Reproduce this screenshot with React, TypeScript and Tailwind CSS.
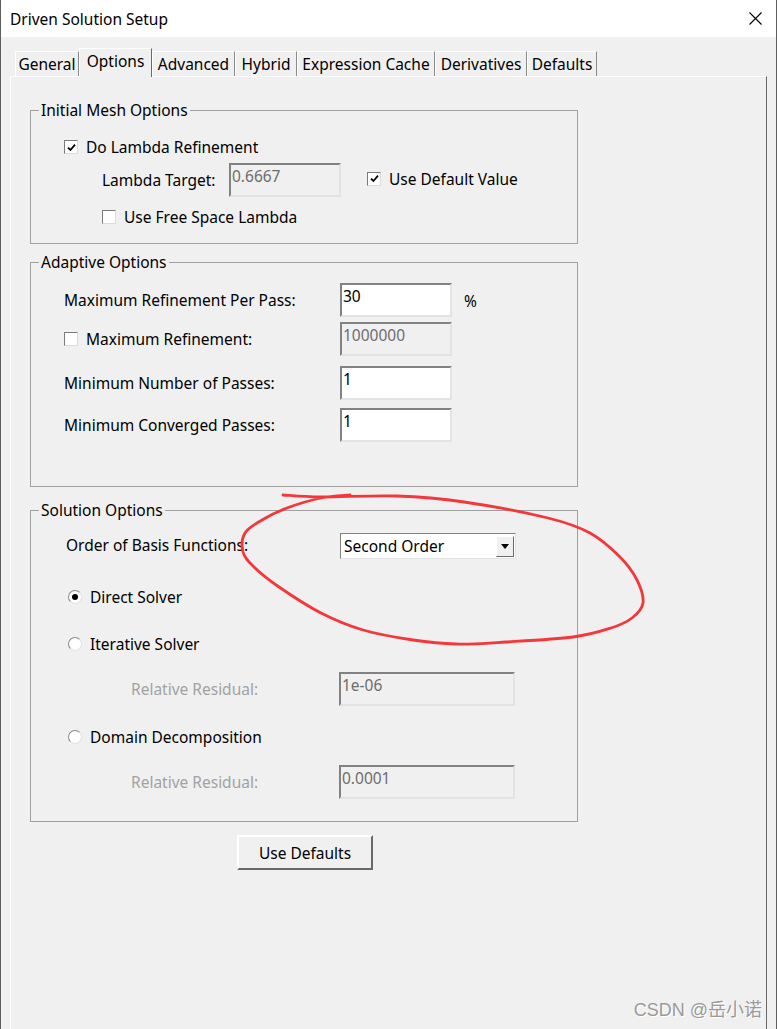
import React from 'react';

// hand-drawn red annotation around the basis-function dropdown
const loop: [number, number][] = [
  [282, 495], [320, 497], [396, 496], [463, 502], [547, 518], [589, 533], [619, 557],
  [636, 580], [642, 603], [631, 618], [610, 628], [572, 637], [505, 642], [455, 644],
  [412, 640], [362, 630], [320, 613], [278, 587], [253, 567], [242, 552], [244, 533],
  [261, 520], [286, 508], [320, 498], [349, 495],
];

function smoothPath(pts: [number, number][]) {
  let d = `M${pts[0][0]} ${pts[0][1]}`;
  for (let i = 0; i < pts.length - 1; i++) {
    const p0 = pts[i - 1] || pts[i];
    const p1 = pts[i];
    const p2 = pts[i + 1];
    const p3 = pts[i + 2] || p2;
    const c1x = p1[0] + (p2[0] - p0[0]) / 6;
    const c1y = p1[1] + (p2[1] - p0[1]) / 6;
    const c2x = p2[0] - (p3[0] - p1[0]) / 6;
    const c2y = p2[1] - (p3[1] - p1[1]) / 6;
    d += ` C${c1x} ${c1y} ${c2x} ${c2y} ${p2[0]} ${p2[1]}`;
  }
  return d;
}

function Check({ checked }: { checked?: boolean }) {
  return (
    <span className="flex h-[14px] w-[14px] shrink-0 items-center justify-center border border-t-[#7a7a7a] border-l-[#7a7a7a] border-b-[#dcdcdc] border-r-[#dcdcdc] bg-white">
      {checked && (
        <svg width="9" height="9" viewBox="0 0 9 9">
          <path d="M1 4.6L3.4 7 8 1.6" fill="none" stroke="#000" strokeWidth="1.8" />
        </svg>
      )}
    </span>
  );
}

function Radio({ on }: { on?: boolean }) {
  return (
    <span className="flex h-[14px] w-[14px] shrink-0 items-center justify-center rounded-full border border-t-[#8a8a8a] border-l-[#8a8a8a] border-b-[#e2e2e2] border-r-[#e2e2e2] bg-white">
      {on && <span className="h-[6px] w-[6px] rounded-full bg-black" />}
    </span>
  );
}

function Field({ value, disabled, w }: { value: string; disabled?: boolean; w: string }) {
  return (
    <div
      className={`${w} h-[34px] shrink-0 border-2 border-t-[#828282] border-l-[#828282] border-b-[#e3e3e3] border-r-[#e3e3e3] pl-[1px] pt-[1px] leading-[20px] ${
        disabled ? 'bg-[#f0f0f0] text-[#6d6d6d]' : 'bg-white text-black'
      }`}
    >
      {value}
    </div>
  );
}

const tabs = [
  { label: 'General', w: 'w-[64px]' },
  { label: 'Options', w: 'w-[73px]', active: true },
  { label: 'Advanced', w: 'w-[83px]' },
  { label: 'Hybrid', w: 'w-[62px]' },
  { label: 'Expression Cache', w: 'w-[138px]' },
  { label: 'Derivatives', w: 'w-[92px]' },
  { label: 'Defaults', w: 'w-[70px]' },
];

export default function App() {
  return (
    <div className="relative h-[1029px] w-[777px] overflow-hidden border-x border-[#5e5e5e] bg-[#f0f0f0] font-['Noto_Sans',sans-serif] text-[15.5px] leading-[20px] text-black">
      {/* Title bar */}
      <div className="flex h-[37px] items-center justify-between bg-white pl-[9px] pr-[14px]">
        <span>Driven Solution Setup</span>
        <svg width="13" height="13" viewBox="0 0 13 13">
          <path d="M0.5 0.5L12.5 12.5M12.5 0.5L0.5 12.5" stroke="#000" strokeWidth="1.1" />
        </svg>
      </div>

      <div className="pl-[9px] pr-[9px] pt-[11px]">
        {/* Tab strip */}
        <div className="flex h-[28px] items-end pl-[5px]">
          {tabs.map((t) =>
            t.active ? (
              <div
                key={t.label}
                className={`${t.w} relative z-10 -mb-px flex h-[29px] items-start justify-center border-l border-t border-r border-l-white border-t-white border-r-[#696969] bg-[#f0f0f0] pt-[2px]`}
              >
                {t.label}
              </div>
            ) : (
              <div
                key={t.label}
                className={`${t.w} flex h-[25px] items-center justify-center border-l border-t border-r border-l-white border-t-white border-r-[#8a8a8a]`}
              >
                {t.label}
              </div>
            )
          )}
        </div>

        {/* Tab panel */}
        <div className="h-[1000px] border-l border-t border-r border-l-white border-t-white border-r-[#696969] pl-[19px] pt-[23px]">
          {/* Initial Mesh Options */}
          <fieldset className="w-[548px] border border-[#a0a0a0] pb-[16px]">
            <legend className="ml-[8px] px-[2px] leading-[20px]">Initial Mesh Options</legend>
            <div className="mt-[17px] flex h-[20px] items-center pl-[33px]">
              <Check checked />
              <span className="ml-[8px]">Do Lambda Refinement</span>
            </div>
            <div className="mt-[6px] flex h-[34px] items-center pl-[71px]">
              <span className="w-[127px]">Lambda Target:</span>
              <Field value="0.6667" disabled w="w-[112px]" />
              <span className="ml-[26px] -mt-[3px]">
                <Check checked />
              </span>
              <span className="ml-[8px] -mt-[3px]">Use Default Value</span>
            </div>
            <div className="mt-[10px] flex h-[20px] items-center pl-[71px]">
              <Check />
              <span className="ml-[8px]">Use Free Space Lambda</span>
            </div>
          </fieldset>

          {/* Adaptive Options */}
          <fieldset className="mt-[8px] w-[548px] border border-[#a0a0a0] pb-[44px]">
            <legend className="ml-[8px] px-[2px] leading-[20px]">Adaptive Options</legend>
            <div className="mt-[11px] flex h-[34px] items-center pl-[33px]">
              <span className="w-[276px]">Maximum Refinement Per Pass:</span>
              <Field value="30" w="w-[112px]" />
              <span className="ml-[12px] mt-[2px]">%</span>
            </div>
            <div className="mt-[5px] flex h-[34px] items-center pl-[33px]">
              <Check />
              <span className="ml-[8px] w-[254px]">Maximum Refinement:</span>
              <Field value="1000000" disabled w="w-[112px]" />
            </div>
            <div className="mt-[10px] flex h-[34px] items-center pl-[33px]">
              <span className="w-[276px]">Minimum Number of Passes:</span>
              <Field value="1" w="w-[112px]" />
            </div>
            <div className="mt-[8px] flex h-[34px] items-center pl-[33px]">
              <span className="w-[276px]">Minimum Converged Passes:</span>
              <Field value="1" w="w-[112px]" />
            </div>
          </fieldset>

          {/* Solution Options */}
          <fieldset className="mt-[13px] w-[548px] border border-[#a0a0a0] pb-[22px]">
            <legend className="ml-[8px] px-[2px] leading-[20px]">Solution Options</legend>
            <div className="mt-[13px] flex h-[26px] items-center pl-[35px]">
              <span className="-mt-[2px] w-[274px]">Order of Basis Functions:</span>
              <div className="flex h-[26px] w-[176px] items-center border border-t-[#828282] border-l-[#828282] border-b-[#e3e3e3] border-r-[#e3e3e3] bg-white pl-[3px] pr-[1px]">
                <span className="flex-1">Second Order</span>
                <span className="flex h-[21px] w-[18px] items-center justify-center border border-t-white border-l-white border-b-[#696969] border-r-[#696969] bg-[#f0f0f0]">
                  <svg width="8" height="5" viewBox="0 0 8 5">
                    <path d="M0 0H8L4 5Z" fill="#000" />
                  </svg>
                </span>
              </div>
            </div>
            <div className="mt-[28px] flex h-[20px] items-center pl-[37px]">
              <Radio on />
              <span className="ml-[8px]">Direct Solver</span>
            </div>
            <div className="mt-[27px] flex h-[20px] items-center pl-[37px]">
              <Radio />
              <span className="ml-[8px]">Iterative Solver</span>
            </div>
            <div className="mt-[18px] flex h-[34px] items-center pl-[100px]">
              <span className="w-[208px] text-[#a2a2a2]">Relative Residual:</span>
              <Field value="1e-06" disabled w="w-[176px]" />
            </div>
            <div className="mt-[21px] flex h-[20px] items-center pl-[37px]">
              <Radio />
              <span className="ml-[8px]">Domain Decomposition</span>
            </div>
            <div className="mt-[18px] flex h-[34px] items-center pl-[100px]">
              <span className="w-[208px] text-[#a2a2a2]">Relative Residual:</span>
              <Field value="0.0001" disabled w="w-[176px]" />
            </div>
          </fieldset>

          <button className="ml-[207px] mt-[13px] flex h-[35px] w-[136px] items-center justify-center border-2 border-t-white border-l-white border-b-[#696969] border-r-[#696969] bg-[#f0f0f0]">
            Use Defaults
          </button>
        </div>
      </div>

      {/* annotation */}
      <svg className="pointer-events-none absolute left-0 top-0" width="777" height="1029">
        <path d={smoothPath(loop)} fill="none" stroke="#f5363a" strokeWidth="2.8" strokeLinecap="round" strokeLinejoin="round" />
      </svg>

      {/* watermark */}
      <span className="absolute bottom-[8px] right-[14px] font-['Liberation_Sans','Noto_Sans_CJK_SC',sans-serif] text-[18px] leading-[22px] text-[#9a9a9a] [text-shadow:1px_1px_0_#ffffff]">
        CSDN @岳小诺
      </span>
    </div>
  );
}
